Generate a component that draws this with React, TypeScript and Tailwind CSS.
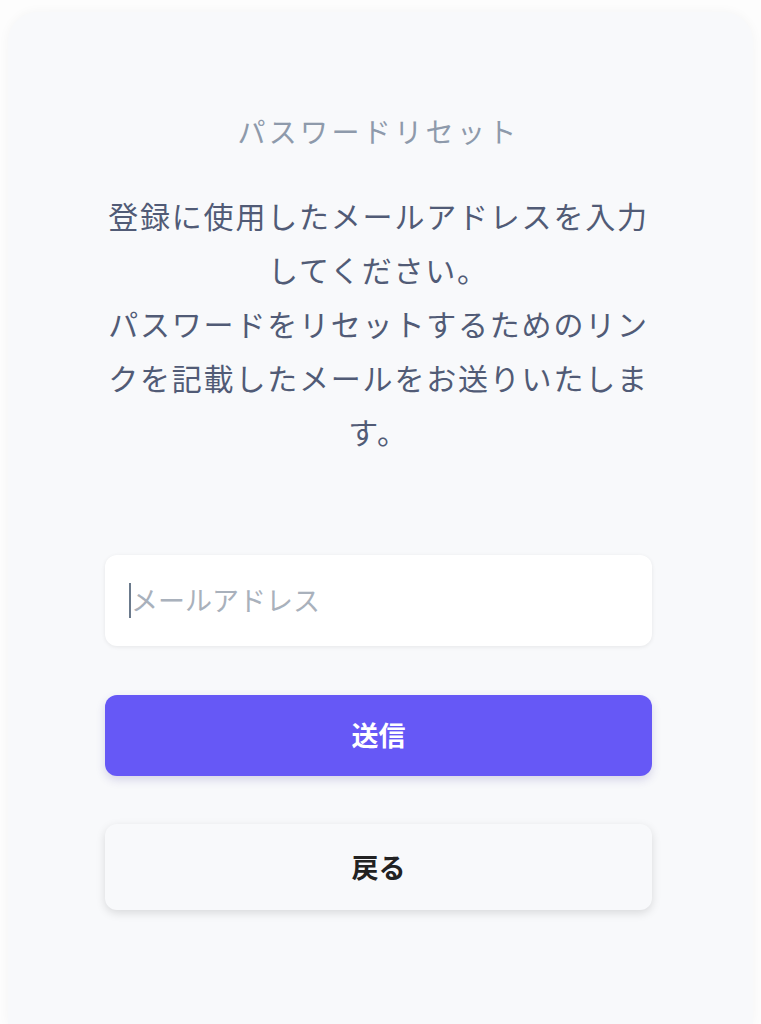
export default function App() {
  return (
    <div
      className="min-h-screen bg-[#fdfdfd] px-[8px] pt-[12px]"
      style={{ fontFamily: '"Noto Sans CJK JP", "Noto Sans", sans-serif' }}
    >
      <div className="min-h-[1012px] rounded-t-[30px] bg-[#f8f9fb] pl-[97px] pr-[101px] pt-[92px] shadow-[0_0_12px_rgba(0,0,0,0.04)]">
        <h1 className="text-center text-[28px] leading-[54px] tracking-[0.12em] font-normal text-[#8e9aab]">
          パスワードリセット
        </h1>
        <p className="mt-[30px] text-center text-[30px] leading-[54px] tracking-[0.06em] text-[#515b76]">
          登録に使用したメールアドレスを入力してください。
          <br />
          パスワードをリセットするためのリンクを記載したメールをお送りいたします。
        </p>

        <div className="mt-[97px] flex h-[91px] items-center rounded-xl bg-white pl-[24px] shadow-[0_1px_4px_rgba(0,0,0,0.08)]">
          <span className="h-[35px] w-[2px] bg-[#6b7a8c]" />
          <input
            type="email"
            placeholder="メールアドレス"
            className="flex-1 bg-transparent text-[27px] text-[#333] outline-none placeholder:text-[#a9b1bc]"
          />
        </div>

        <button className="mt-[49px] flex h-[81px] w-full items-center justify-center rounded-xl bg-[#6658f6] text-[27px] font-bold text-white shadow-[0_4px_10px_rgba(60,50,150,0.18)]">
          送信
        </button>

        <button className="mt-[48px] flex h-[86px] w-full items-center justify-center rounded-xl bg-[#f8f9fb] text-[27px] font-bold text-[#222] shadow-[0_3px_10px_rgba(0,0,0,0.13)]">
          戻る
        </button>
      </div>
    </div>
  );
}
